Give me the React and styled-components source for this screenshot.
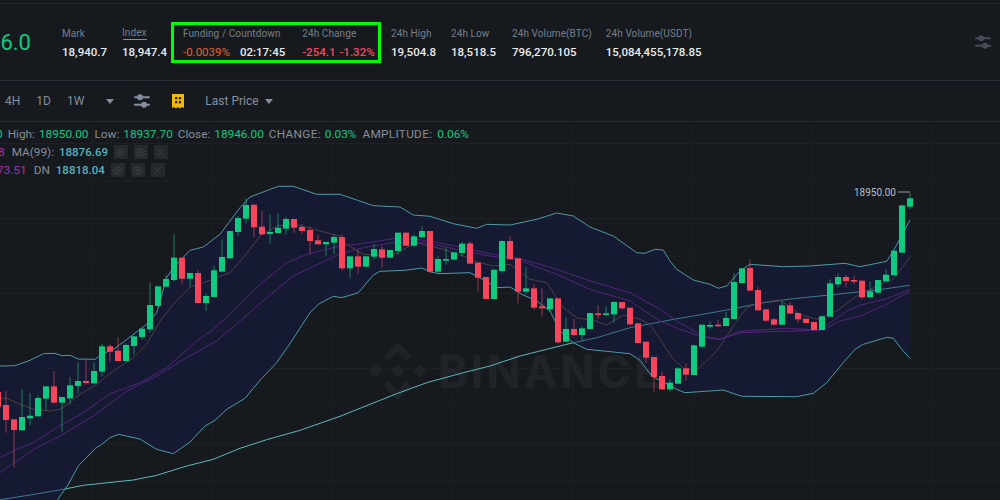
import React from "react";
import styled, { createGlobalStyle } from "styled-components";
import { Eye, Settings, X } from "lucide-react";

const GREEN = "#0ECB81";
const RED = "#F6465D";

// [x, up?, bodyTop, bodyBottom, wickTop, wickBottom], read off 3x crops: px = origin + value / 3
const G = 1;
const R = 0;
const candleSets = [
  [0, 340, [
    [-6, R, 153, 197, 153, 197], [18, R, 192, 237, 150, 275], [42, R, 235, 267, 235, 380], [66, G, 228, 268, 145, 268],
    [90, G, 224, 232, 156, 253], [114, G, 171, 226, 163, 226], [138, G, 136, 173, 136, 208], [162, R, 136, 185, 90, 188],
    [186, G, 168, 185, 168, 272], [210, G, 133, 172, 108, 190], [234, G, 120, 135, 64, 157], [258, R, 120, 126, 58, 132],
    [282, G, 90, 127, 64, 127], [306, G, 16, 92, 8, 107], [330, R, 16, 32, 10, 62], [354, R, 29, 60, -12, 60],
    [378, G, 12, 60, 8, 60],
  ]],
  [0, 180, [
    [402, G, 466, 495, 466, 522], [426, G, 443, 468, 443, 476], [450, G, 372, 445, 306, 455], [474, G, 316, 375, 316, 380],
    [498, G, 294, 317, 282, 317], [522, G, 230, 297, 158, 302], [546, R, 230, 293, 230, 310], [570, G, 276, 293, 276, 316],
    [594, R, 276, 366, 268, 366], [618, G, 345, 366, 337, 390], [642, G, 268, 348, 254, 348], [666, G, 228, 272, 175, 272],
    [690, G, 150, 232, 150, 232], [714, G, 111, 153, 105, 165], [738, G, 72, 113, 52, 128], [762, R, 71, 139, 71, 170],
    [786, R, 137, 160, 88, 160], [810, G, 153, 159, 100, 188], [834, G, 140, 156, 97, 156], [858, G, 114, 143, 108, 161],
    [882, R, 114, 140, 114, 156], [906, R, 138, 150, 130, 158], [930, R, 147, 180, 136, 221], [954, R, 178, 190, 160, 190],
    [978, G, 183, 190, 184, 226],
  ]],
  [330, 200, [
    [12, G, 108, 125, 100, 160], [36, R, 108, 202, 100, 208], [60, G, 166, 202, 166, 232], [84, R, 166, 197, 148, 218],
    [108, G, 166, 197, 166, 197], [132, G, 144, 167, 128, 175], [156, R, 145, 170, 135, 200], [180, G, 147, 170, 147, 170],
    [204, G, 95, 150, 95, 162], [228, R, 95, 134, 95, 134], [252, G, 106, 134, 100, 137], [276, G, 90, 109, 75, 109],
    [300, R, 90, 212, 90, 215], [324, G, 174, 212, 166, 218], [348, G, 174, 179, 141, 191], [372, G, 154, 176, 154, 176],
    [396, G, 128, 156, 122, 166], [420, R, 127, 188, 121, 188], [444, R, 185, 230, 185, 272], [468, R, 228, 294, 228, 296],
    [492, G, 206, 294, 206, 294], [516, G, 120, 210, 118, 215], [540, R, 120, 175, 105, 175], [564, R, 172, 272, 172, 307],
    [588, G, 262, 272, 198, 280], [612, R, 262, 320, 250, 327], [636, R, 316, 322, 262, 347], [660, G, 292, 325, 292, 333],
    [684, R, 292, 424, 292, 428], [708, G, 384, 422, 348, 422], [732, R, 384, 402, 354, 405], [756, G, 382, 402, 376, 418],
    [780, G, 336, 384, 336, 384], [804, R, 337, 342, 312, 354], [828, G, 337, 342, 316, 344], [852, G, 303, 340, 300, 365],
    [876, R, 303, 322, 303, 326], [900, R, 320, 370, 320, 374], [924, R, 367, 426, 367, 428], [948, R, 422, 470, 422, 486],
    [972, R, 468, 528, 468, 572],
  ]],
  [660, 175, [
    [6, R, 600, 640, 586, 642], [30, G, 620, 640, 610, 647], [54, G, 577, 623, 572, 623], [78, R, 577, 596, 562, 614],
    [102, G, 508, 597, 508, 597], [126, G, 446, 512, 446, 515], [150, G, 447, 452, 436, 458], [174, R, 446, 451, 432, 452],
    [198, G, 426, 450, 408, 450], [222, G, 318, 429, 292, 429], [246, G, 277, 321, 277, 321], [270, R, 276, 344, 250, 344],
    [294, R, 342, 403, 332, 403], [318, R, 400, 434, 400, 437], [342, R, 430, 446, 426, 446], [366, G, 388, 446, 378, 446],
    [390, R, 388, 413, 378, 413], [414, R, 411, 430, 411, 440], [438, R, 428, 441, 428, 441], [462, R, 438, 462, 438, 462],
    [486, G, 421, 462, 418, 462], [510, G, 322, 422, 310, 422], [534, G, 303, 325, 292, 335], [558, R, 303, 315, 296, 334],
    [582, R, 312, 317, 300, 325], [606, R, 314, 364, 314, 370], [630, G, 346, 364, 316, 364], [654, G, 312, 350, 312, 350],
    [678, G, 296, 316, 280, 316], [702, G, 224, 298, 224, 298], [726, G, 88, 230, 88, 230], [750, G, 67, 92, 50, 100],
  ]],
];

const candles = candleSets.flatMap(([ox, oy, rows]) =>
  rows.map(([zx, up, top, bottom, high, low]) => ({
    x: Math.round(ox + zx / 3),
    up,
    top: oy + top / 3,
    bottom: oy + bottom / 3,
    high: oy + high / 3,
    low: oy + low / 3,
  }))
);

const trace = (ox, oy, pts) => pts.map(([x, y]) => [ox + x / 3, oy + y / 3]);

const upperBand = [
  ...trace(0, 340, [[0, 75], [45, 74], [90, 58], [130, 38], [165, 37], [185, 44], [210, 43], [235, 54], [285, 55], [305, 40], [345, 22]]),
  ...trace(0, 180, [[440, 430], [470, 395], [500, 290], [520, 260], [570, 208], [610, 198], [660, 160], [720, 80], [750, 48], [835, 16], [880, 16], [950, 40], [1020, 40]]),
  ...trace(330, 200, [[130, 14], [210, 18], [250, 42], [300, 46], [370, 68], [440, 82], [470, 70], [540, 72], [620, 55], [680, 36], [730, 45], [780, 78], [850, 105], [920, 155], [945, 157], [975, 145], [1000, 147]]),
  ...trace(660, 175, [[30, 255], [50, 280], [100, 312], [150, 325], [175, 337], [200, 330], [240, 285], [270, 265], [370, 272], [450, 270], [555, 262], [600, 272], [680, 256], [700, 225], [750, 132]]),
];

const lowerBand = [
  ...trace(0, 340, [[170, 480], [205, 430], [235, 375], [285, 323], [305, 310], [330, 290], [355, 280], [420, 294], [470, 325], [520, 338], [570, 303], [615, 255], [645, 238], [680, 205], [735, 172], [785, 112], [830, 65], [875, 0]]),
  ...trace(0, 180, [[930, 395], [955, 370], [1000, 346]]),
  ...trace(330, 200, [[35, 290], [85, 275], [130, 222], [150, 211], [225, 208], [275, 201], [300, 212], [325, 218], [420, 215], [460, 236], [500, 260], [540, 258], [575, 280], [620, 300], [660, 330], [690, 390], [730, 425], [770, 445], [900, 458], [930, 478], [965, 525]]),
  ...trace(660, 175, [[50, 640], [75, 650], [190, 642], [245, 661], [410, 662], [460, 652], [500, 620], [550, 560], [585, 520], [610, 505], [680, 484], [700, 487], [725, 520], [750, 547]]),
];

const ma99 = [
  ...trace(0, 340, [[0, 476], [90, 462], [190, 445], [250, 433], [400, 417], [470, 403], [560, 375], [640, 355], [720, 322], [800, 296], [900, 268], [1020, 226]]),
  ...trace(330, 200, [[200, 578], [290, 545], [400, 515], [480, 495], [570, 465], [650, 445]]),
  ...trace(330, 200, [[730, 425], [800, 410], [900, 380], [1020, 357]]),
  ...trace(660, 175, [[100, 420], [200, 402], [300, 382], [400, 368], [500, 358], [650, 342], [750, 328]]),
];

const ma7 = [
  ...trace(0, 340, [[0, 172], [20, 172], [60, 190], [100, 205], [150, 210], [185, 203], [240, 160], [290, 130], [340, 90], [400, 50], [440, 10]]),
  ...trace(0, 180, [[480, 420], [520, 370], [570, 318], [610, 305], [690, 275], [730, 230], [780, 165], [830, 135], [880, 128], [960, 150], [1020, 165]]),
  ...trace(330, 200, [[50, 130], [100, 160], [180, 165], [260, 125], [340, 145], [400, 165], [440, 182], [490, 195], [540, 190], [600, 235], [650, 245], [700, 320], [740, 350], [790, 358], [830, 372], [880, 342], [930, 355], [960, 370]]),
  ...trace(660, 175, [[0, 490], [40, 550], [75, 580], [115, 578], [170, 525], [220, 450], [260, 395], [300, 380], [360, 372], [420, 415], [470, 430], [530, 405], [590, 360], [670, 322], [700, 310], [750, 243]]),
];

const ma25 = [
  ...trace(0, 340, [[0, 350], [50, 325], [100, 305], [170, 260], [250, 215], [330, 158], [420, 125], [500, 80], [590, 0]]),
  ...trace(0, 180, [[640, 445], [700, 390], [780, 310], [860, 245], [920, 220], [1020, 195]]),
  ...trace(330, 200, [[80, 130], [190, 113], [290, 118], [400, 140], [480, 158], [560, 170], [680, 205], [780, 240], [900, 275]]),
  ...trace(660, 175, [[0, 400], [50, 435], [130, 480], [180, 490], [240, 466], [380, 457], [480, 462], [560, 405], [600, 388], [680, 368], [750, 340]]),
];

const ma50 = [
  ...trace(0, 340, [[0, 395], [50, 360], [110, 320], [180, 285], [280, 225], [380, 150], [470, 105], [560, 50], [650, 0]]),
  ...trace(0, 180, [[720, 420], [800, 350], [880, 285], [1020, 218]]),
  ...trace(330, 200, [[100, 140], [190, 125], [290, 125], [400, 150], [480, 165], [560, 175], [680, 220], [780, 265], [900, 300]]),
  ...trace(660, 175, [[0, 435], [60, 460], [130, 484], [180, 490], [240, 470], [400, 465], [490, 462], [540, 435], [600, 420], [680, 385], [750, 345]]),
];

const toPath = (pts) => pts.map(([x, y], i) => `${i ? "L" : "M"}${x.toFixed(1)} ${y.toFixed(1)}`).join(" ");

const bandFill = `${toPath([[0, 500], ...upperBand])} ${toPath([...lowerBand].reverse()).replace("M", "L")} L0 500 Z`;

const gridX = [93, 213, 333, 453, 573, 693, 813, 933];
const gridY = [142.5, 180, 217.5, 255, 292.5, 330, 367.5, 405, 442.5, 480];

const GlobalStyle = createGlobalStyle`
  html, body {
    margin: 0;
    padding: 0;
    background: #161a1e;
    overflow: hidden;
  }
  body {
    font-family: Roboto, "Noto Sans", sans-serif;
  }
`;

const Page = styled.div`
  width: 1000px;
  height: 500px;
  display: flex;
  flex-direction: column;
  overflow: hidden;
  background: #161a1e;
`;

const Header = styled.header`
  height: 78px;
  margin-top: 3px;
  padding-top: 2px;
  display: flex;
  align-items: center;
  border-top: 1px solid #262b31;
  border-bottom: 1px solid #2a2f37;
  box-sizing: border-box;
`;

const Price = styled.div`
  width: 31px;
  flex: none;
  display: flex;
  justify-content: flex-end;
  overflow: hidden;
  font-size: 22px;
  color: ${GREEN};
  margin: 0 31px 2px 0;
`;

const Stat = styled.div`
  display: flex;
  flex-direction: column;
  gap: 5px;
  flex: none;
  margin-right: ${(p) => p.$gap || 0}px;
`;

const Label = styled.span`
  font-size: 10px;
  letter-spacing: 0.1px;
  line-height: 13px;
  color: #767e8a;
  white-space: nowrap;
  ${(p) => p.$underline && "width: 26px; box-shadow: 0 2px 0 -1px #848e9c; margin-top: -1px; margin-bottom: 1px;"}
`;

const Value = styled.span`
  font-size: 11.5px;
  line-height: 15px;
  font-weight: 500;
  color: ${(p) => p.$color || "#eaecef"};
  white-space: nowrap;
  display: flex;
  gap: ${(p) => p.$gap || 0}px;
`;

const Highlight = styled.div`
  width: 210px;
  height: 41px;
  box-sizing: border-box;
  flex: none;
  border: 3px solid #00ff00;
  padding: 2px 0 0 9px;
  display: flex;
  align-items: center;
  margin: 0 10px 2px 0;
`;

const SettingsButton = styled.div`
  margin: 0 9px 2px auto;
  display: flex;
`;

const Toolbar = styled.div`
  height: 41px;
  flex: none;
  display: flex;
  align-items: center;
  gap: 16px;
  padding-left: 5px;
  border-bottom: 1px solid #262b31;
  box-sizing: border-box;
`;

const Interval = styled.span`
  font-size: 12px;
  color: #848e9c;
`;

const Caret = styled.i`
  width: 0;
  height: 0;
  border-left: 4.5px solid transparent;
  border-right: 4.5px solid transparent;
  border-top: 5px solid #848e9c;
  margin-left: ${(p) => p.$ml || 0}px;
`;

const ToolIcon = styled.div`
  display: flex;
  margin-left: ${(p) => p.$ml || 0}px;
`;

const PriceSelect = styled.div`
  display: flex;
  align-items: center;
  gap: 6px;
  font-size: 12px;
  color: #848e9c;
  margin-left: 5px;
`;

const ChartArea = styled.div`
  position: relative;
  flex: 1;
  overflow: hidden;
`;

const ChartSvg = styled.svg`
  display: block;
  width: 1000px;
  height: 379px;
`;

const Watermark = styled.text`
  font-family: Inter, Roboto, sans-serif;
  font-size: 45px;
  font-weight: 700;
  letter-spacing: 3px;
  fill: #202428;
`;

const LastLabel = styled.text`
  font-family: Roboto, sans-serif;
  font-size: 10px;
  fill: #b7bdc6;
`;

const Legend = styled.div`
  position: absolute;
  top: 3px;
  left: 0;
  display: flex;
  flex-direction: column;
  font-size: 11.8px;
  line-height: 18px;
`;

const LegendRow = styled.div`
  display: flex;
  align-items: center;
  height: 18px;
  white-space: nowrap;
  margin-left: ${(p) => p.$offset || 0}px;
`;

const Key = styled.span`
  color: #848e9c;
  margin-left: ${(p) => p.$ml || 0}px;
  letter-spacing: ${(p) => (p.$caps ? "0.3px" : "0")};
`;

const Val = styled.span`
  color: ${(p) => p.$color};
  font-weight: ${(p) => p.$weight || 400};
  font-size: ${(p) => (p.$weight ? "11.5px" : "inherit")};
  margin-left: ${(p) => p.$ml || 0}px;
`;

const LegendTools = styled.div`
  display: flex;
  gap: 6px;
  margin-left: 6px;
`;

const LegendBtn = styled.div`
  width: 14px;
  height: 14px;
  background: #25282c;
  color: #3f444a;
  display: flex;
  align-items: center;
  justify-content: center;
`;

function Sliders({ color, size = 16 }) {
  return (
    <svg width={size} height={size} viewBox="0 0 16 16" fill={color}>
      <rect x="0" y="3.2" width="16" height="2" rx="1" />
      <circle cx="6" cy="4.2" r="3" />
      <rect x="0" y="10.8" width="16" height="2" rx="1" />
      <circle cx="10" cy="11.8" r="3" />
    </svg>
  );
}

function TemplateIcon() {
  return (
    <svg width="12" height="15" viewBox="0 0 12 15">
      <path d="M0 0H12V14L10 13L8 14.5L6 13L4 14.5L2 13L0 14Z" fill="#f0b90b" />
      <g fill="#33290a">
        <rect x="3" y="3" width="2.3" height="2.3" />
        <rect x="6.8" y="3" width="2.3" height="2.3" />
        <rect x="3" y="7" width="2.3" height="2.3" />
        <rect x="6.8" y="7" width="2.3" height="2.3" />
      </g>
    </svg>
  );
}

function Tools() {
  return (
    <LegendTools>
      <LegendBtn><Eye size={11} /></LegendBtn>
      <LegendBtn><Settings size={11} /></LegendBtn>
      <LegendBtn><X size={11} /></LegendBtn>
    </LegendTools>
  );
}

function Chart() {
  return (
    <ChartSvg viewBox="0 121 1000 379">
      {gridX.map((x) => (
        <line key={x} x1={x} x2={x} y1="121" y2="500" stroke="#1d2125" />
      ))}
      {gridY.map((y) => (
        <line key={y} x1="0" x2="1000" y1={y} y2={y} stroke="#1d2125" />
      ))}

      <g fill="#202428" transform="translate(397.5 370)">
        <path d="M0 -29L14 -15L9 -10L0 -19L-9 -10L-14 -15Z" />
        <path d="M0 29L14 15L9 10L0 19L-9 10L-14 15Z" />
        <path d="M-22 -6.5L-15.5 0L-22 6.5L-28.5 0Z" />
        <path d="M22 -6.5L28.5 0L22 6.5L15.5 0Z" />
        <path d="M0 -6.5L6.5 0L0 6.5L-6.5 0Z" />
      </g>
      <Watermark x="438" y="387">BINANCE</Watermark>

      <g fill="none" strokeWidth="1">
        <path d={toPath(ma99)} stroke="#5db8ba" />
        <path d={toPath(ma7)} stroke="#76593a" />
        <path d={toPath(ma25)} stroke="#7a2f92" />
        <path d={toPath(ma50)} stroke="#7a2f92" />
      </g>
      <path d={bandFill} fill="rgba(19, 26, 80, 0.4)" />
      <g fill="none" strokeWidth="1" stroke="#4d9aa3">
        <path d={toPath(upperBand)} />
        <path d={toPath(lowerBand)} />
      </g>

      {candles.map((c) => {
        const color = c.up ? GREEN : RED;
        return (
          <g key={c.x} fill={color}>
            <rect x={c.x - 0.5} y={c.high} width="1" height={c.low - c.high} opacity="0.6" />
            <rect x={c.x - 3} y={c.top} width="6" height={Math.max(c.bottom - c.top, 1.5)} />
          </g>
        );
      })}

      <LastLabel x="854" y="195">18950.00</LastLabel>
      <rect x="898" y="190.5" width="12" height="1" fill="#9aa0a8" />
    </ChartSvg>
  );
}

export default function App() {
  return (
    <Page>
      <GlobalStyle />
      <Header>
        <Price>18,946.0</Price>
        <Stat $gap={15}>
          <Label>Mark</Label>
          <Value>18,940.7</Value>
        </Stat>
        <Stat $gap={4}>
          <Label $underline>Index</Label>
          <Value>18,947.4</Value>
        </Stat>
        <Highlight>
          <Stat $gap={17}>
            <Label>Funding / Countdown</Label>
            <Value $gap={10}>
              <Val $color="#e0622f">-0.0039%</Val>
              <span>02:17:45</span>
            </Value>
          </Stat>
          <Stat>
            <Label>24h Change</Label>
            <Value $color={RED} $gap={4}>
              <span>-254.1</span>
              <span>-1.32%</span>
            </Value>
          </Stat>
        </Highlight>
        <Stat $gap={15}>
          <Label>24h High</Label>
          <Value>19,504.8</Value>
        </Stat>
        <Stat $gap={16}>
          <Label>24h Low</Label>
          <Value>18,518.5</Value>
        </Stat>
        <Stat $gap={14}>
          <Label>24h Volume(BTC)</Label>
          <Value>796,270.105</Value>
        </Stat>
        <Stat>
          <Label>24h Volume(USDT)</Label>
          <Value>15,084,455,178.85</Value>
        </Stat>
        <SettingsButton>
          <Sliders color="#474d57" />
        </SettingsButton>
      </Header>

      <Toolbar>
        <Interval>4H</Interval>
        <Interval>1D</Interval>
        <Interval>1W</Interval>
        <Caret $ml={6} />
        <ToolIcon $ml={4}>
          <Sliders color="#848e9c" />
        </ToolIcon>
        <ToolIcon $ml={6}>
          <TemplateIcon />
        </ToolIcon>
        <PriceSelect>
          Last Price <Caret />
        </PriceSelect>
      </Toolbar>

      <ChartArea>
        <Chart />
        <Legend>
          <LegendRow $offset={-4}>
            <Val $color={GREEN}>0</Val>
            <Key $ml={5}>High:</Key>
            <Val $color={GREEN} $ml={4}>18950.00</Val>
            <Key $ml={6}>Low:</Key>
            <Val $color={GREEN} $ml={4}>18937.70</Val>
            <Key $ml={5}>Close:</Key>
            <Val $color={GREEN} $ml={4}>18946.00</Val>
            <Key $ml={5} $caps>CHANGE:</Key>
            <Val $color={GREEN} $ml={4}>0.03%</Val>
            <Key $ml={6} $caps>AMPLITUDE:</Key>
            <Val $color={GREEN} $ml={5}>0.06%</Val>
          </LegendRow>
          <LegendRow $offset={-2}>
            <Val $color="#a42fa8">8</Val>
            <Key $ml={7}>MA(99):</Key>
            <Val $color="#55b3bb" $weight={500} $ml={5}>18876.69</Val>
            <Tools />
          </LegendRow>
          <LegendRow $offset={-3}>
            <Val $color="#a42fa8">73.51</Val>
            <Key $ml={7}>DN</Key>
            <Val $color="#55b3bb" $weight={500} $ml={6}>18818.04</Val>
            <Tools />
          </LegendRow>
        </Legend>
      </ChartArea>
    </Page>
  );
}
